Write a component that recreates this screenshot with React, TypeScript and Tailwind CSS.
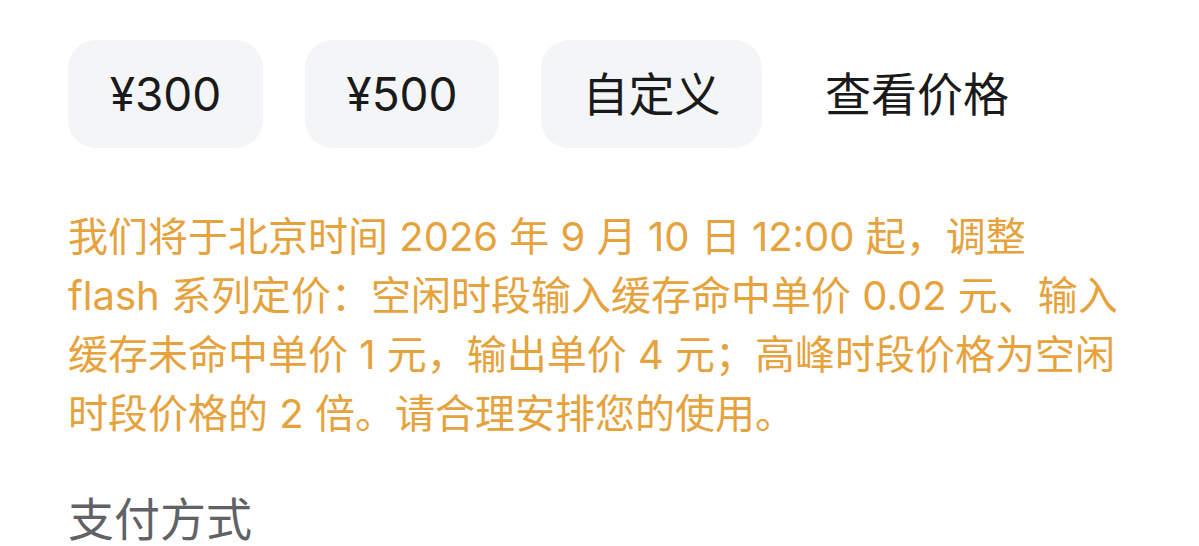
const amounts = [
  { label: '¥300', w: 'w-[195px]' },
  { label: '¥500', w: 'w-[194px]' },
  { label: '自定义', w: 'w-[221px]' },
]

const notice = [
  '我们将于北京时间 2026 年 9 月 10 日 12:00 起，调整',
  'flash 系列定价：空闲时段输入缓存命中单价 0.02 元、输入',
  '缓存未命中单价 1 元，输出单价 4 元；高峰时段价格为空闲',
  '时段价格的 2 倍。请合理安排您的使用。',
]

export default function App() {
  return (
    <div
      className="h-[546px] w-[1199px] overflow-hidden bg-white px-[68px] pt-[40px]"
      style={{ fontFamily: 'Inter, "Noto Sans CJK SC", sans-serif' }}
    >
      <div className="flex items-center gap-[42px]">
        {amounts.map((a) => (
          <button
            key={a.label}
            className={`${a.w} flex h-[108px] items-center justify-center rounded-[28px] bg-[#f4f5f7] text-[46px] text-[#1a1a1a]`}
          >
            {a.label}
          </button>
        ))}
        <button className="ml-[21px] text-[46px] text-[#1a1a1a]">查看价格</button>
      </div>

      <div className="mt-[59px] text-[40px] leading-[59px] text-[#e6a23c]">
        {notice.map((line) => (
          <div key={line} className="whitespace-nowrap">
            {line}
          </div>
        ))}
      </div>

      <div className="mt-[46px] text-[46px] leading-[60px] text-[#606266]">支付方式</div>
    </div>
  )
}
